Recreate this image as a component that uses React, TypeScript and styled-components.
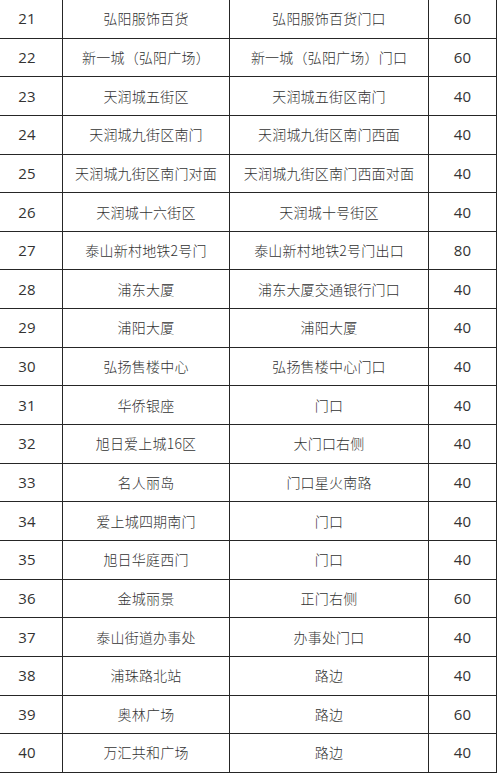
import React from "react";
import styled, { createGlobalStyle } from "styled-components";

const GlobalStyle = createGlobalStyle`
  html, body {
    margin: 0;
    padding: 0;
    background: #fff;
    overflow: hidden;
  }
  body {
    font-family: "Noto Sans CJK SC", "Noto Sans", sans-serif;
  }
`;

const Page = styled.div`
  width: 500px;
  height: 774px;
  overflow: hidden;
  background: #fff;
`;

const Grid = styled.div`
  display: grid;
  grid-template-columns: 71px 167px 199px 68px;
  grid-auto-rows: 38.65px;
  margin-left: -9px;
  margin-top: -1px;
  width: max-content;
  border-left: 1px solid #262626;
  border-top: 1px solid #262626;
`;

const Cell = styled.div<{ $num?: boolean }>`
  box-sizing: border-box;
  display: flex;
  align-items: center;
  justify-content: center;
  border-right: 1px solid #262626;
  border-bottom: 1px solid #262626;
  color: #333;
  font-size: ${(p) => (p.$num ? "15px" : "14px")};
  font-weight: ${(p) => (p.$num ? 400 : 300)};
  font-family: ${(p) =>
    p.$num
      ? `"Open Sans", "Noto Sans", sans-serif`
      : `"Noto Sans CJK SC", "Noto Sans", sans-serif`};
  white-space: nowrap;
  letter-spacing: 0.2px;
  padding-bottom: 1px;
`;

const rows: [number, string, string, number][] = [
  [21, "弘阳服饰百货", "弘阳服饰百货门口", 60],
  [22, "新一城（弘阳广场）", "新一城（弘阳广场）门口", 60],
  [23, "天润城五街区", "天润城五街区南门", 40],
  [24, "天润城九街区南门", "天润城九街区南门西面", 40],
  [25, "天润城九街区南门对面", "天润城九街区南门西面对面", 40],
  [26, "天润城十六街区", "天润城十号街区", 40],
  [27, "泰山新村地铁2号门", "泰山新村地铁2号门出口", 80],
  [28, "浦东大厦", "浦东大厦交通银行门口", 40],
  [29, "浦阳大厦", "浦阳大厦", 40],
  [30, "弘扬售楼中心", "弘扬售楼中心门口", 40],
  [31, "华侨银座", "门口", 40],
  [32, "旭日爱上城16区", "大门口右侧", 40],
  [33, "名人丽岛", "门口星火南路", 40],
  [34, "爱上城四期南门", "门口", 40],
  [35, "旭日华庭西门", "门口", 40],
  [36, "金城丽景", "正门右侧", 60],
  [37, "泰山街道办事处", "办事处门口", 40],
  [38, "浦珠路北站", "路边", 40],
  [39, "奥林广场", "路边", 60],
  [40, "万汇共和广场", "路边", 40],
];

export default function App() {
  return (
    <Page>
      <GlobalStyle />
      <Grid>
        {rows.map(([no, name, spot, count]) => (
          <React.Fragment key={no}>
            <Cell $num>{no}</Cell>
            <Cell>{name}</Cell>
            <Cell>{spot}</Cell>
            <Cell $num>{count}</Cell>
          </React.Fragment>
        ))}
      </Grid>
    </Page>
  );
}
